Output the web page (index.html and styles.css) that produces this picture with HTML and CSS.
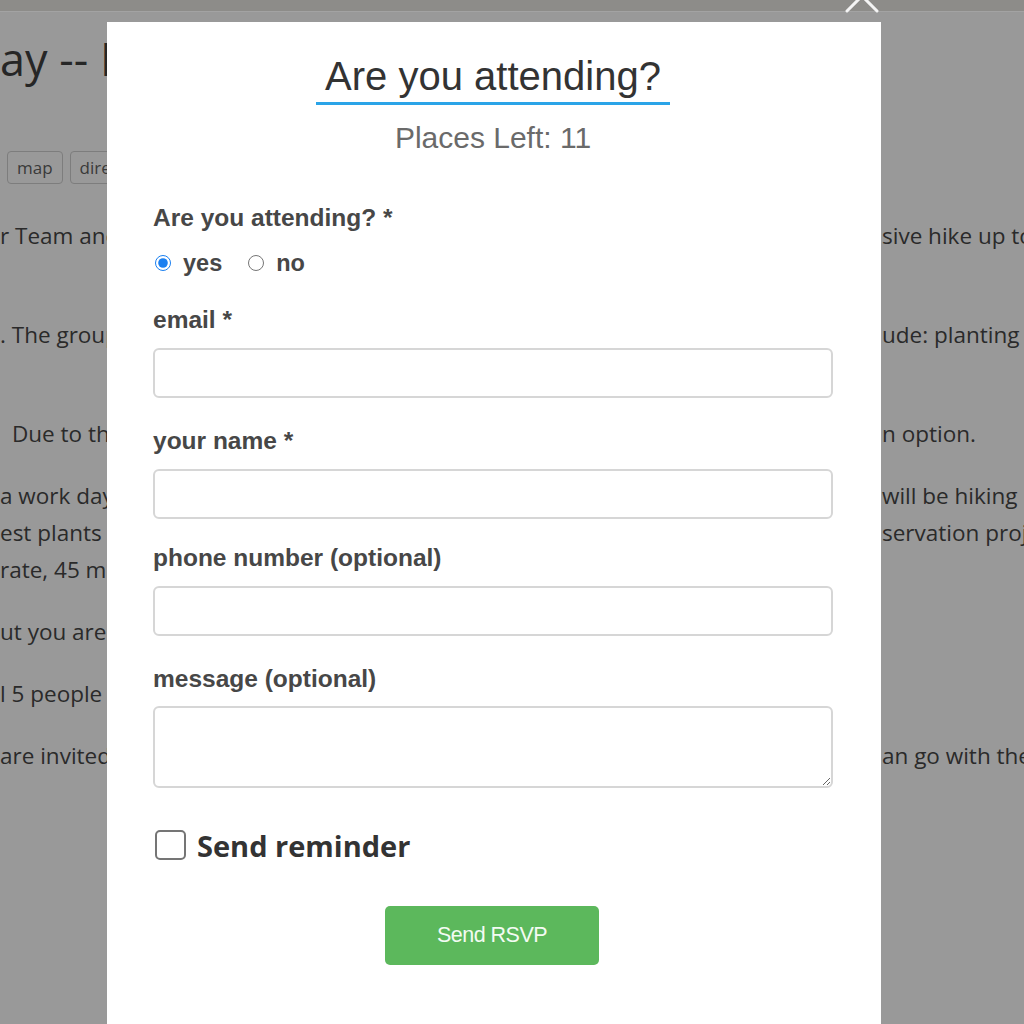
FILE: index.html
```html
<!DOCTYPE html>
<html lang="en">
<head>
<meta charset="utf-8">
<title>RSVP</title>
<link rel="stylesheet" href="styles.css">
</head>
<body>
<div class="page">
  <div class="topbar"></div>
  <h1 class="heading">ay -- Family Hike</h1>
  <div class="tags">
    <span class="tag">map</span>
    <span class="tag">directions</span>
  </div>
  <div class="para">
    <div class="row"><span class="l">r Team and</span><span class="r">sive hike up to</span></div>
    <div class="row"><span class="l"></span><span class="r"></span></div>
  </div>
  <div class="para">
    <div class="row"><span class="l">. The group</span><span class="r">ude: planting</span></div>
    <div class="row"><span class="l"></span><span class="r"></span></div>
  </div>
  <div class="para">
    <div class="row"><span class="l indent">Due to the</span><span class="r">n option.</span></div>
  </div>
  <div class="para">
    <div class="row"><span class="l">a work day</span><span class="r">will be hiking</span></div>
    <div class="row"><span class="l">est plants</span><span class="r">servation proj</span></div>
    <div class="row"><span class="l">rate, 45 min</span><span class="r"></span></div>
  </div>
  <div class="para">
    <div class="row"><span class="l">ut you are</span><span class="r"></span></div>
  </div>
  <div class="para">
    <div class="row"><span class="l">l 5 people</span><span class="r"></span></div>
  </div>
  <div class="para">
    <div class="row"><span class="l">are invited</span><span class="r">an go with the</span></div>
  </div>
</div>

<svg class="close" viewBox="0 0 34 34" width="34" height="34" aria-label="close">
  <path d="M2 2 L32 32 M32 2 L2 32" stroke="#f4f4f4" stroke-width="3" stroke-linecap="round" fill="none"/>
</svg>

<div class="modal">
  <div class="modal-head">
    <h2 class="title">Are you attending?</h2>
    <div class="places">Places Left: 11</div>
  </div>
  <form class="form">
    <div class="label">Are you attending? *</div>
    <div class="radios">
      <label class="opt"><input type="radio" name="att" checked><span>yes</span></label>
      <label class="opt"><input type="radio" name="att"><span>no</span></label>
    </div>
    <label class="label gap">email *</label>
    <input class="field" type="text">
    <label class="label gap">your name *</label>
    <input class="field" type="text">
    <label class="label gap-sm">phone number (optional)</label>
    <input class="field" type="text">
    <label class="label gap">message (optional)</label>
    <textarea class="field area"></textarea>
    <label class="remind"><input class="check" type="checkbox"><span>Send reminder</span></label>
    <div class="actions"><button type="button" class="send">Send RSVP</button></div>
  </form>
</div>
</body>
</html>
```
FILE: styles.css
```css
* { box-sizing: border-box; }
html, body { margin: 0; padding: 0; }
body {
  width: 1024px;
  height: 1024px;
  overflow: hidden;
  background: #999999;
  font-family: "Open Sans", "Liberation Sans", sans-serif;
  color: #2a2a2a;
  position: relative;
}
.page { width: 1024px; }
.topbar {
  height: 12px;
  background: #8d8c89;
  border-bottom: 1px solid #a3a3a3;
}
.heading {
  margin: 21px 0 0 0;
  font-size: 45px;
  font-weight: 400;
  line-height: 52px;
  height: 52px;
  white-space: nowrap;
  color: #262626;
}
.tags {
  display: flex;
  gap: 7px;
  margin: 66px 0 0 7px;
}
.tag {
  height: 33px;
  line-height: 31px;
  padding: 0 9px;
  border: 1px solid #7d7d7d;
  border-radius: 4px;
  font-size: 17px;
  color: #3a3a3a;
}
.para { margin-top: 25px; }
.tags + .para { margin-top: 33px; }
.row {
  display: grid;
  grid-template-columns: 881px 143px;
  height: 37px;
  line-height: 37px;
  font-size: 22.5px;
  white-space: nowrap;
}
.row .l, .row .r { overflow: hidden; }
.row .r { padding-left: 1px; }
.row .indent { padding-left: 12px; }

.close {
  position: absolute;
  left: 845px;
  top: -21px;
}

.modal {
  position: absolute;
  left: 107px;
  top: 22px;
  width: 774px;
  height: 1010px;
  background: #ffffff;
  padding: 0 48px 0 46px;
  font-family: "Liberation Sans", Arial, sans-serif;
}
.modal-head {
  display: flex;
  flex-direction: column;
  align-items: center;
}
.title {
  margin: 31px 0 0 0;
  padding: 0 9px 3px 9px;
  font-size: 40px;
  line-height: 46px;
  font-weight: 400;
  color: #333333;
  border-bottom: 3px solid #2aa4e8;
}
.places {
  margin-top: 16px;
  font-size: 30px;
  line-height: 34px;
  color: #6a6a6a;
}
.form {
  display: flex;
  flex-direction: column;
  margin-top: 49px;
}
.label {
  display: block;
  font-size: 24.5px;
  line-height: 28px;
  font-weight: 700;
  color: #474747;
}
.label.gap { margin-top: 29px; }
.label.gap-sm { margin-top: 25px; }
.radios {
  display: flex;
  gap: 24px;
  margin-top: 17px;
  height: 28px;
  align-items: center;
}
.opt {
  display: flex;
  align-items: center;
  gap: 12px;
  font-size: 23.5px;
  font-weight: 700;
  color: #474747;
  line-height: 28px;
}
.opt input {
  width: 16px;
  height: 16px;
  margin: 0 0 0 2px;
  accent-color: #1a7ff0;
}
.field {
  display: block;
  width: 680px;
  height: 50px;
  margin-top: 14px;
  border: 2px solid #d6d6d6;
  border-radius: 6px;
  background: #fff;
  font-size: 18px;
}
.area {
  height: 82px;
  margin-top: 13px;
  resize: both;
}
.remind {
  display: flex;
  align-items: center;
  gap: 11px;
  margin-top: 42px;
  height: 30px;
  font-family: "Open Sans", sans-serif;
  font-weight: 700;
  font-size: 29px;
  color: #333333;
}
.check {
  appearance: none;
  -webkit-appearance: none;
  width: 31px;
  height: 30px;
  margin: 0 0 0 2px;
  border: 2px solid #757575;
  border-radius: 5px;
  background: #fff;
}
.actions {
  display: flex;
  justify-content: center;
  margin-top: 46px;
}
.send {
  width: 214px;
  height: 59px;
  border: none;
  border-radius: 5px;
  background: #5cb85c;
  color: #f3fbf3;
  font-family: "Liberation Sans", Arial, sans-serif;
  font-size: 21.5px;
  letter-spacing: -0.5px;
  margin-left: -2px;
}
```
